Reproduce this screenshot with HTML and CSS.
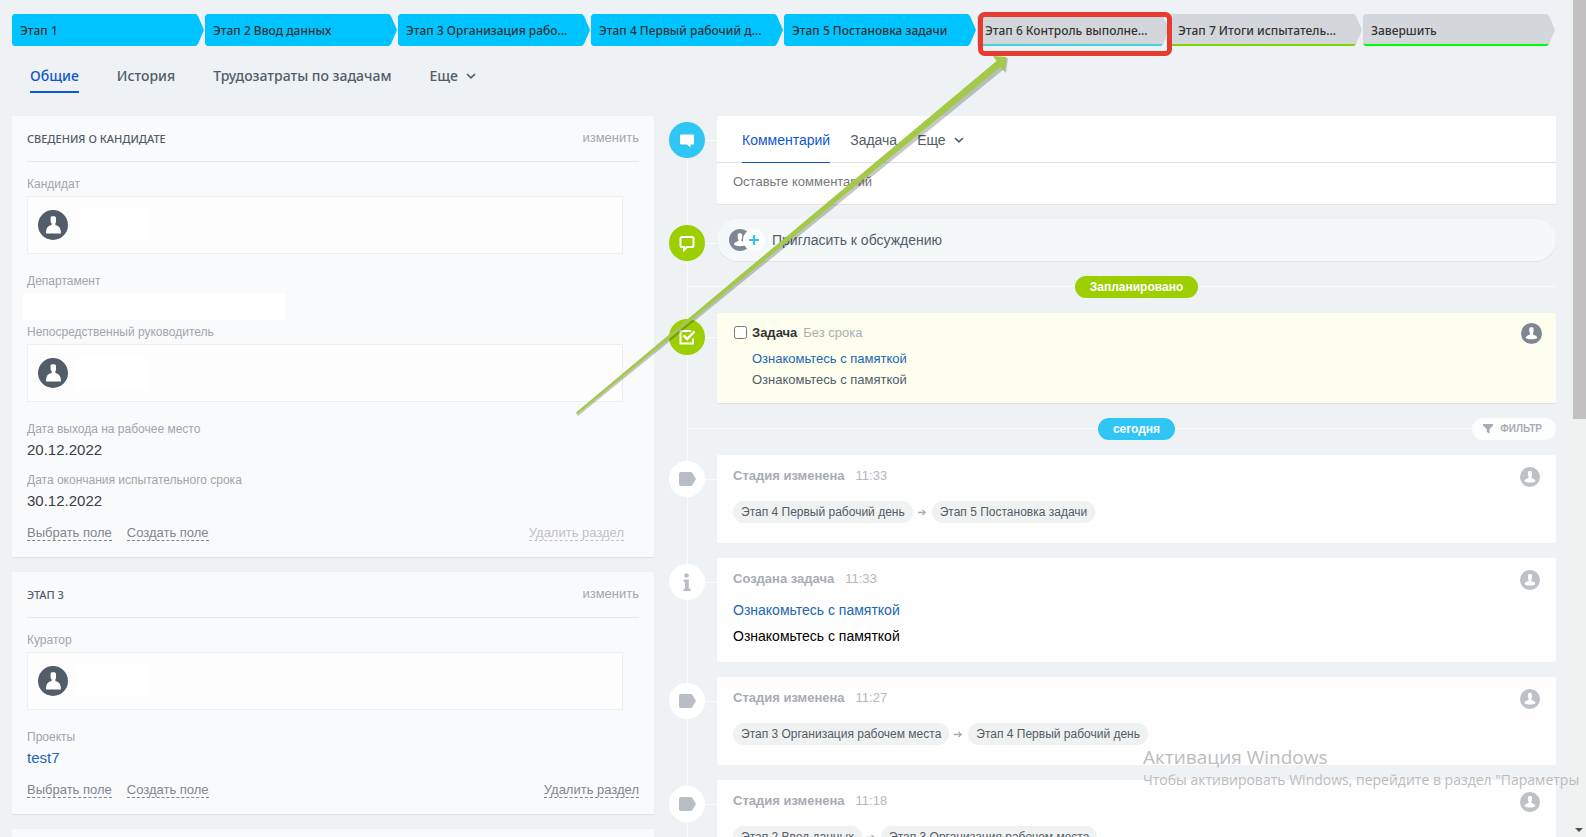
FILE: index.html
```html
<!DOCTYPE html>
<html lang="ru">
<head>
<meta charset="utf-8">
<title>Карточка кандидата</title>
<link rel="stylesheet" href="styles.css">
</head>
<body>
<svg class="sprite" aria-hidden="true">
  <symbol id="person" viewBox="0 0 30 30">
    <path d="M12.6 7.2C13 6 17.6 5.600 18 7.800V10.500C18.300 11.500 18 12.300 17.400 13.200V15C20.500 16 22.800 17 23 23.500H8C8.200 17 10 16 13.600 15V13.200C12.700 12.300 12.500 11.500 12.600 10.500Z" fill="#fff"/>
  </symbol>
  <symbol id="user" viewBox="0 0 22 22">
    <path d="M8.700 5.700C8.700 3.900 13.200 3.900 13.200 5.900V8.300C13.200 9.500 12.600 10.200 12.500 10.900V12C14.500 13 17 13.200 17 15.800C15 17.600 7 17.600 5 15.800C5 13.200 7.500 13 9.500 12V10.900C9.200 10 8.700 9.500 8.700 8.300Z" fill="#fff"/>
  </symbol>
  <symbol id="stage" viewBox="0 0 36 36">
    <path d="M12 11H21.500Q22.700 11 23.400 12L27 18L23.400 24Q22.700 25 21.500 25H12Q10 25 10 23V13Q10 11 12 11Z" fill="#b9bec5"/>
  </symbol>
  <symbol id="chevron" viewBox="0 0 10 6">
    <path d="M1 1L5 4.800L9 1" fill="none" stroke="#525c69" stroke-width="1.700"/>
  </symbol>
  <symbol id="arrow" viewBox="0 0 9 7">
    <path d="M0 3.500H7M4.500 1L7.200 3.500L4.500 6" fill="none" stroke="#a8adb4" stroke-width="1.300"/>
  </symbol>
</svg>

<div class="app">
  <nav class="stages" aria-label="Этапы">
    <button class="stage stage-done">Этап 1</button>
    <button class="stage stage-done">Этап 2 Ввод данных</button>
    <button class="stage stage-done">Этап 3 Организация рабо...</button>
    <button class="stage stage-done">Этап 4 Первый рабочий д...</button>
    <button class="stage stage-done">Этап 5 Постановка задачи</button>
    <button class="stage stage-sky">Этап 6 Контроль выполне...</button>
    <button class="stage stage-lime">Этап 7 Итоги испытатель...</button>
    <button class="stage stage-green">Завершить</button>
  </nav>

  <nav class="tabs" aria-label="Разделы">
    <a class="tab tab-active" href="#">Общие</a>
    <a class="tab" href="#">История</a>
    <a class="tab" href="#">Трудозатраты по задачам</a>
    <button class="tab">Еще <svg class="chevron"><use href="#chevron"/></svg></button>
  </nav>

  <main class="columns">
    <div class="details">
      <section class="panel">
        <header class="panel-head">
          <h2 class="panel-title">Сведения о кандидате</h2>
          <button class="panel-edit">изменить</button>
        </header>
        <div class="field">
          <div class="label">Кандидат</div>
          <div class="person"><svg class="avatar"><use href="#person"/></svg><span class="blank"></span></div>
        </div>
        <div class="field field-after-box">
          <div class="label">Департамент</div>
          <div class="blank-wide"></div>
        </div>
        <div class="field field-tight">
          <div class="label">Непосредственный руководитель</div>
          <div class="person"><svg class="avatar"><use href="#person"/></svg><span class="blank"></span></div>
        </div>
        <div class="field field-after-box">
          <div class="label">Дата выхода на рабочее место</div>
          <div class="value">20.12.2022</div>
        </div>
        <div class="field">
          <div class="label">Дата окончания испытательного срока</div>
          <div class="value">30.12.2022</div>
        </div>
        <footer class="panel-foot panel-foot-inset">
          <button class="link">Выбрать поле</button>
          <button class="link">Создать поле</button>
          <button class="link link-end link-muted">Удалить раздел</button>
        </footer>
      </section>

      <section class="panel">
        <header class="panel-head">
          <h2 class="panel-title">Этап 3</h2>
          <button class="panel-edit">изменить</button>
        </header>
        <div class="field">
          <div class="label">Куратор</div>
          <div class="person"><svg class="avatar"><use href="#person"/></svg><span class="blank"></span></div>
        </div>
        <div class="field field-after-box">
          <div class="label">Проекты</div>
          <a class="value value-link" href="#">test7</a>
        </div>
        <footer class="panel-foot">
          <button class="link">Выбрать поле</button>
          <button class="link">Создать поле</button>
          <button class="link link-end">Удалить раздел</button>
        </footer>
      </section>

      <section class="panel panel-next"></section>
    </div>

    <div class="timeline">
      <div class="row">
        <svg class="dot dot-sky" viewBox="0 0 36 36"><path d="M12 12.500H24Q25 12.500 25 13.500V21.500Q25 22.500 24 22.500H21.500V25.500L18 22.500H12Q11 22.500 11 21.500V13.500Q11 12.500 12 12.500Z" fill="#fff"/></svg>
        <div class="card composer">
          <div class="composer-tabs">
            <button class="composer-tab composer-tab-active">Комментарий</button>
            <button class="composer-tab">Задача</button>
            <button class="composer-tab">Еще <svg class="chevron"><use href="#chevron"/></svg></button>
          </div>
          <input class="composer-input" type="text" placeholder="Оставьте комментарий" aria-label="Комментарий">
        </div>
      </div>

      <div class="row">
        <svg class="dot dot-lime" viewBox="0 0 36 36"><path d="M13 12H23Q24.500 12 24.500 13.500V20.500Q24.500 22 23 22H18L15 25V22H13Q11.500 22 11.500 20.500V13.500Q11.500 12 13 12Z" fill="none" stroke="#fff" stroke-width="2"/></svg>
        <button class="invite">
          <svg class="invite-icon" viewBox="0 0 36 22">
            <circle cx="11" cy="11" r="11" fill="#7f8792"/>
            <use href="#user" width="22" height="22"/>
            <circle cx="25" cy="11" r="11" fill="#fff"/>
            <path d="M25 6V16M20 11H30" stroke="#2fc6f6" stroke-width="2"/>
          </svg>
          Пригласить к обсуждению
        </button>
      </div>

      <div class="divider"><span class="badge badge-lime">Запланировано</span></div>

      <div class="row">
        <svg class="dot dot-lime" viewBox="0 0 36 36"><path d="M22 12H11.500V24.500H24V19.500" fill="none" stroke="#fff" stroke-width="2"/><path d="M14.500 16.500L18.200 20L25.500 12.500" fill="none" stroke="#fff" stroke-width="2.500"/></svg>
        <article class="card task">
          <input class="check" type="checkbox" id="task">
          <div class="task-body">
            <div class="task-head"><label class="task-title" for="task">Задача</label><span class="task-term">Без срока</span></div>
            <a class="task-link" href="#">Ознакомьтесь с памяткой</a>
            <div class="task-text">Ознакомьтесь с памяткой</div>
          </div>
          <svg class="user user-dark"><use href="#user"/></svg>
        </article>
      </div>

      <div class="divider">
        <span class="badge badge-sky">сегодня</span>
        <button class="filter"><svg class="filter-icon" viewBox="0 0 10 10"><path d="M0 0H10V1.500L6.500 5.300V9.500L3.800 8V5.300L0 1.500Z" fill="#a8adb4"/></svg>ФИЛЬТР</button>
      </div>

      <div class="row">
        <svg class="dot"><use href="#stage"/></svg>
        <article class="card event">
          <div class="event-head"><b>Стадия изменена</b><time>11:33</time><svg class="user"><use href="#user"/></svg></div>
          <div class="event-stages"><span class="pill">Этап 4 Первый рабочий день</span><svg class="arrow"><use href="#arrow"/></svg><span class="pill">Этап 5 Постановка задачи</span></div>
        </article>
      </div>

      <div class="row">
        <svg class="dot" viewBox="0 0 36 36"><circle cx="17.500" cy="11.500" r="2.300" fill="#b9bec5"/><path d="M14.500 15.500H19.800V24.500H21.500V27H14.500V24.500H16V18H14.500Z" fill="#b9bec5"/></svg>
        <article class="card event event-text-card">
          <div class="event-head"><b>Создана задача</b><time>11:33</time><svg class="user"><use href="#user"/></svg></div>
          <a class="event-link" href="#">Ознакомьтесь с памяткой</a>
          <div class="event-text">Ознакомьтесь с памяткой</div>
        </article>
      </div>

      <div class="row">
        <svg class="dot"><use href="#stage"/></svg>
        <article class="card event">
          <div class="event-head"><b>Стадия изменена</b><time>11:27</time><svg class="user"><use href="#user"/></svg></div>
          <div class="event-stages"><span class="pill">Этап 3 Организация рабочем места</span><svg class="arrow"><use href="#arrow"/></svg><span class="pill">Этап 4 Первый рабочий день</span></div>
        </article>
      </div>

      <div class="row">
        <svg class="dot"><use href="#stage"/></svg>
        <article class="card event">
          <div class="event-head"><b>Стадия изменена</b><time>11:18</time><svg class="user"><use href="#user"/></svg></div>
          <div class="event-stages"><span class="pill">Этап 2 Ввод данных</span><svg class="arrow"><use href="#arrow"/></svg><span class="pill">Этап 3 Организация рабочем места</span></div>
        </article>
      </div>
    </div>
  </main>

  <div class="scrollbar"><div class="scroll-thumb"></div><svg class="scroll-down" viewBox="0 0 8 4"><path d="M0 0H8L4 4Z" fill="#505050"/></svg></div>

  <svg class="markup" width="1180" height="420" viewBox="0 0 1180 420" aria-hidden="true">
    <path d="M578 416L1003 70L1006 73L1008 58L996 59L1000 63L577 414Z" fill="#000" opacity="0.220"/>
    <path d="M577 414.500L1000.500 67L1004.500 71.500L1006.500 57L993 56L996.500 61L576 412.500Z" fill="#a4c94a"/>
    <rect x="980.500" y="14.500" width="189" height="39" rx="4" fill="none" stroke="#e83b30" stroke-width="5"/>
  </svg>

  <div class="watermark">
    <div class="watermark-title">Активация Windows</div>
    <div class="watermark-text">Чтобы активировать Windows, перейдите в раздел "Параметры</div>
  </div>
</div>
</body>
</html>
```
FILE: styles.css
```css
* { box-sizing: border-box; }

body {
  margin: 0;
  background: #eef2f4;
  color: #525c69;
  font-family: "Liberation Sans", Arial, sans-serif;
  font-size: 13px;
  line-height: 16px;
}

button {
  padding: 0;
  border: 0;
  background: none;
  color: inherit;
  font: inherit;
  cursor: pointer;
}

a { color: inherit; text-decoration: none; }

.sprite { position: absolute; width: 0; height: 0; }

.app {
  position: relative;
  height: 100vh;
  overflow: hidden;
  padding: 14px 30px 0 12px;
}

/* Stage bar */
.stages {
  display: grid;
  grid-template-columns: repeat(8, minmax(0, 1fr));
  gap: 1px;
  padding-right: 1px;
}

.stage {
  height: 32px;
  padding: 4px 12px 0 8px;
  overflow: hidden;
  background: #d3d7dc;
  color: #333;
  font: 500 12px/26px "Noto Sans", "Open Sans", sans-serif;
  text-align: left;
  text-overflow: ellipsis;
  white-space: nowrap;
  border-bottom: 2px solid transparent;
  clip-path: polygon(0 2px, 2px 0, calc(100% - 8px) 0, calc(100% - 6px) 2px, 100% 50%, calc(100% - 6px) calc(100% - 2px), calc(100% - 8px) 100%, 2px 100%, 0 calc(100% - 2px));
}

.stage-done { background: #00c4ff; }
.stage-sky { border-color: #47d1e2; }
.stage-lime { border-color: #7bd500; }
.stage-green { border-color: #00ff00; }

/* Section tabs */
.tabs {
  display: flex;
  gap: 38px;
  padding: 18px 18px 0;
  margin-bottom: 23px;
}

.tab {
  display: flex;
  align-items: center;
  gap: 8px;
  height: 29px;
  padding-bottom: 3px;
  border-bottom: 2px solid transparent;
  font: 500 14px/24px "Noto Sans", "Open Sans", sans-serif;
}

.tab-active { color: #1058d0; border-color: #1058d0; }

.chevron { width: 10px; height: 6px; }

/* Page columns */
.columns {
  display: grid;
  grid-template-columns: minmax(0, 642fr) minmax(0, 902fr);
  align-items: start;
}

.details { display: grid; gap: 15px; }

.panel {
  padding: 0 15px 16px;
  background: #f9fafc;
  box-shadow: 0 1px 1px rgba(0, 0, 0, 0.06);
}

.panel-next { height: 120px; }

.panel-head {
  display: flex;
  justify-content: space-between;
  align-items: center;
  height: 46px;
  margin-bottom: 14px;
  border-bottom: 1px solid #e6e9ec;
}

.panel-title {
  margin: 0;
  font: 500 11px/16px "Noto Sans", "Open Sans", sans-serif;
  text-transform: uppercase;
}

.panel-edit { color: #a3a7ab; padding-bottom: 2px; }

.field { margin-top: 12px; }
.field-after-box { margin-top: 19px; }
.field-tight { margin-top: 4px; }

.label { color: #a0a5ac; font-size: 12px; }

.person {
  display: flex;
  align-items: center;
  gap: 8px;
  height: 58px;
  margin: 4px 16px 0 0;
  padding: 0 10px;
  border: 1px solid #eceeef;
  background: #fdfdfd;
}

.avatar {
  width: 30px;
  height: 30px;
  border-radius: 50%;
  background: #535c69;
}

.blank { width: 72px; height: 32px; background: #fff; }

.blank-wide {
  width: 263px;
  height: 27px;
  margin: 4px 0 0 -4px;
  background: #fff;
}

.value {
  display: block;
  margin-top: 3px;
  color: #3a3f47;
  font-size: 15px;
  line-height: 20px;
}

.value-link { color: #2067b0; }

.panel-foot { display: flex; gap: 15px; margin-top: 14px; }
.panel-foot-inset { padding-right: 15px; }

.link { color: #80868e; border-bottom: 1px dashed #80868e; line-height: 15px; }
.link-end { margin-left: auto; }
.link-muted { color: #c0c2c4; border-color: #c0c2c4; }

.panel-head + .field { margin-top: 0; }

/* Timeline */
.timeline {
  position: relative;
  display: grid;
  gap: 15px;
  padding-left: 15px;
}

.timeline::before {
  content: "";
  position: absolute;
  top: 24px;
  bottom: 0;
  left: 33px;
  width: 1px;
  background: #fafcfc;
}

.row {
  position: relative;
  display: grid;
  grid-template-columns: 36px minmax(0, 1fr);
  gap: 12px;
  align-items: start;
}

.row::before {
  content: "";
  position: absolute;
  top: 24px;
  left: 36px;
  width: 12px;
  height: 1px;
  background: #fafcfc;
}

.dot {
  position: relative;
  width: 36px;
  height: 36px;
  margin-top: 6px;
  border-radius: 50%;
  background: #fff;
}

.dot-sky { background: #2fc6f6; }
.dot-lime { background: #9dcf00; }

.card {
  border-radius: 2px;
  background: #fefefe;
}

.composer { background: #fff; box-shadow: 0 1px 1px rgba(0, 0, 0, 0.06); }

.composer-tabs {
  display: flex;
  gap: 20px;
  padding: 0 25px;
  border-bottom: 1px solid #dfe2e5;
}

.composer-tab {
  display: flex;
  align-items: center;
  gap: 8px;
  height: 47px;
  margin-bottom: -1px;
  padding-top: 2px;
  border-bottom: 1px solid transparent;
  font-size: 14px;
}

.composer-tab-active { color: #1058d0; border-color: #1058d0; }

.composer-input {
  display: block;
  width: 100%;
  height: 41px;
  padding: 0 16px 4px;
  border: 0;
  background: none;
  font: inherit;
}

.composer-input::placeholder { color: #777; opacity: 1; }

.invite {
  display: flex;
  align-items: center;
  gap: 7px;
  height: 42px;
  padding: 0 12px;
  border-radius: 21px;
  background: #f5f8f9;
  box-shadow: 0 1px 1px rgba(0, 0, 0, 0.06);
  font-size: 14px;
}

.invite-icon { width: 36px; height: 22px; }

.divider {
  position: relative;
  display: grid;
  grid-template-columns: 1fr auto 1fr;
  padding-left: 48px;
}

.divider::before {
  content: "";
  position: absolute;
  top: 10px;
  left: 18px;
  right: 0;
  height: 1px;
  background: #fafcfc;
}

.badge {
  position: relative;
  grid-column: 2;
  padding: 0 15px;
  border-radius: 11px;
  color: #fff;
  font-size: 12px;
  font-weight: bold;
  line-height: 22px;
}

.badge-lime { background: #9dcf00; }
.badge-sky { background: #2fc6f6; }

.filter {
  position: relative;
  justify-self: end;
  display: flex;
  align-items: center;
  gap: 7px;
  height: 22px;
  padding: 0 14px 0 11px;
  border-radius: 11px;
  background: #fcfdfd;
  color: #a8adb4;
  font-size: 10px;
  font-weight: bold;
}

.filter-icon { width: 10px; height: 10px; }

.task {
  display: flex;
  align-items: start;
  padding: 10px 14px 13px 17px;
  background: #fefeef;
  box-shadow: 0 1px 1px rgba(0, 0, 0, 0.08);
}

.check { width: 13px; height: 13px; margin: 3px 5px 0 0; }

.task-body { flex: 1; line-height: 21px; }
.task-head { display: flex; gap: 6px; height: 25px; line-height: 20px; }
.task-title { color: #333; font-weight: bold; }
.task-term { color: #a8adb4; }
.task-link { display: block; color: #2067b0; }

.user {
  width: 20px;
  height: 20px;
  margin-left: auto;
  border-radius: 50%;
  background: #bcc1c8;
}

.user-dark { width: 21px; height: 21px; background: #7f8792; }

.event { padding: 12px 16px 20px; font-size: 14px; }
.event-text-card { padding-bottom: 18px; }

.event-head {
  display: flex;
  gap: 11px;
  height: 20px;
  margin-bottom: 14px;
  color: #a8adb4;
  font-size: 13px;
  line-height: 18px;
}

.event-text-card .event-head { margin-bottom: 12px; }

.event-head time { color: #b4b8be; }

.event-stages { display: flex; align-items: center; gap: 5px; }

.pill {
  padding: 0 8px;
  border-radius: 11px;
  background: #f0f1f1;
  font-size: 12px;
  line-height: 22px;
}

.arrow { width: 9px; height: 7px; }

.event-link { display: block; color: #2067b0; line-height: 16px; margin-bottom: 10px; }
.event-text { color: #000; line-height: 16px; }

/* Scrollbar */
.scrollbar {
  position: absolute;
  top: 0;
  right: 0;
  bottom: 0;
  width: 14px;
  background: #f0f1f1;
}

.scroll-thumb { height: 50%; margin-left: 1px; background: #c1c1c1; }

.scroll-down {
  position: absolute;
  right: 3px;
  bottom: 5px;
  width: 8px;
  height: 4px;
}

/* Overlays */
.markup { position: absolute; top: 0; left: 0; pointer-events: none; }

.watermark {
  position: absolute;
  left: calc(100% - 443px);
  bottom: 47px;
  color: #bcbcbc;
  font-family: "Open Sans", sans-serif;
  white-space: nowrap;
  pointer-events: none;
}

.watermark-title { font-size: 19px; line-height: 26px; }
.watermark-text { font-size: 14px; line-height: 20px; }
```
